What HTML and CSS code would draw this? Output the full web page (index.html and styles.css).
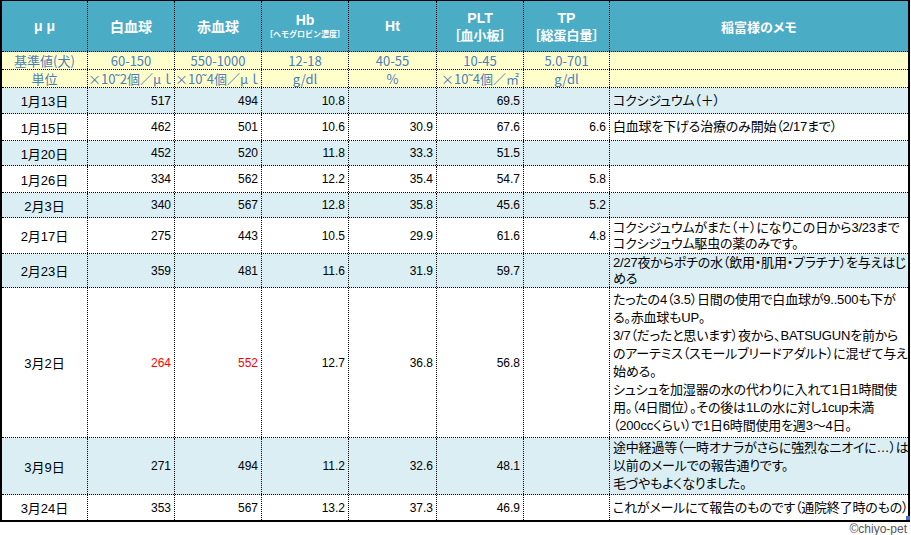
FILE: index.html
```html
<!DOCTYPE html>
<html lang="ja">
<head>
<meta charset="utf-8">
<title>血液検査結果</title>
<link rel="stylesheet" href="styles.css">
</head>
<body>
<div class="sheet">
  <div class="grid">
    <div class="row head">
      <div class="cell">μ μ</div>
      <div class="cell">白血球</div>
      <div class="cell">赤血球</div>
      <div class="cell stack"><span>Hb</span><span class="sub-tiny">［ヘモグロビン濃度］</span></div>
      <div class="cell">Ht</div>
      <div class="cell stack"><span>PLT</span><span class="sub">［血小板］</span></div>
      <div class="cell stack"><span>TP</span><span class="sub">［総蛋白量］</span></div>
      <div class="cell memo-head">稲富様のメモ</div>
    </div>
    <div class="row ref">
      <div class="cell">基準値(犬)</div><div class="cell">60-150</div><div class="cell">550-1000</div><div class="cell">12-18</div><div class="cell">40-55</div><div class="cell">10-45</div><div class="cell">5.0-701</div><div class="cell"></div>
    </div>
    <div class="row ref">
      <div class="cell">単位</div><div class="cell">×10˜2個／μｌ</div><div class="cell">×10˜4個／μｌ</div><div class="cell">g/dl</div><div class="cell">%</div><div class="cell">×10˜4個／㎡</div><div class="cell">g/dl</div><div class="cell"></div>
    </div>

    <div class="row data alt h26"><div class="cell date">1月13日</div><div class="cell n">517</div><div class="cell n">494</div><div class="cell n">10.8</div><div class="cell n"></div><div class="cell n">69.5</div><div class="cell n"></div><div class="cell memo">コクシジュウム（＋）</div></div>
    <div class="row data h27"><div class="cell date">1月15日</div><div class="cell n">462</div><div class="cell n">501</div><div class="cell n">10.6</div><div class="cell n">30.9</div><div class="cell n">67.6</div><div class="cell n">6.6</div><div class="cell memo">白血球を下げる治療のみ開始（2/17まで）</div></div>
    <div class="row data alt h25"><div class="cell date">1月20日</div><div class="cell n">452</div><div class="cell n">520</div><div class="cell n">11.8</div><div class="cell n">33.3</div><div class="cell n">51.5</div><div class="cell n"></div><div class="cell memo"></div></div>
    <div class="row data h27"><div class="cell date">1月26日</div><div class="cell n">334</div><div class="cell n">562</div><div class="cell n">12.2</div><div class="cell n">35.4</div><div class="cell n">54.7</div><div class="cell n">5.8</div><div class="cell memo"></div></div>
    <div class="row data alt h25"><div class="cell date">2月3日</div><div class="cell n">340</div><div class="cell n">567</div><div class="cell n">12.8</div><div class="cell n">35.8</div><div class="cell n">45.6</div><div class="cell n">5.2</div><div class="cell memo"></div></div>
    <div class="row data h36"><div class="cell date">2月17日</div><div class="cell n">275</div><div class="cell n">443</div><div class="cell n">10.5</div><div class="cell n">29.9</div><div class="cell n">61.6</div><div class="cell n">4.8</div><div class="cell memo"><p>コクシジュウムがまた（＋）になりこの日から3/23まで<br>コクシジュウム駆虫の薬のみです。</p></div></div>
    <div class="row data alt h34"><div class="cell date">2月23日</div><div class="cell n">359</div><div class="cell n">481</div><div class="cell n">11.6</div><div class="cell n">31.9</div><div class="cell n">59.7</div><div class="cell n"></div><div class="cell memo"><p>2/27夜からポチの水（飲用・肌用・プラチナ）を与えはじ<br>める</p></div></div>
    <div class="row data h150"><div class="cell date">3月2日</div><div class="cell n red">264</div><div class="cell n red">552</div><div class="cell n">12.7</div><div class="cell n">36.8</div><div class="cell n">56.8</div><div class="cell n"></div><div class="cell memo tall"><p>たったの4（3.5）日間の使用で白血球が9..500も下が<br>る。赤血球もUP。<br>3/7（だったと思います）夜から、BATSUGUNを前から<br>のアーテミス（スモールブリードアダルト）に混ぜて与え<br>始める。<br>シュシュを加湿器の水の代わりに入れて1日1時間使<br>用。（4日間位）。その後は1Lの水に対し1cup未満<br>（200ccくらい）で1日6時間使用を週3～4日。</p></div></div>
    <div class="row data alt h57"><div class="cell date">3月9日</div><div class="cell n">271</div><div class="cell n">494</div><div class="cell n">11.2</div><div class="cell n">32.6</div><div class="cell n">48.1</div><div class="cell n"></div><div class="cell memo tall"><p>途中経過等（一時オナラがさらに強烈なニオイに…）は<br>以前のメールでの報告通りです。<br>毛づやもよくなりました。</p></div></div>
    <div class="row data last h25"><div class="cell date">3月24日</div><div class="cell n">353</div><div class="cell n">567</div><div class="cell n">13.2</div><div class="cell n">37.3</div><div class="cell n">46.9</div><div class="cell n"></div><div class="cell memo">これがメールにて報告のものです（通院終了時のもの）</div></div>
  </div>
  <div class="credit">©chiyo-pet</div>
</div>
</body>
</html>
```

FILE: styles.css
```css
html, body {
  margin: 0;
  padding: 0;
  background: #ffffff;
}

body {
  font-family: "Liberation Sans", "Noto Sans CJK JP", sans-serif;
  font-size: 12px;
  color: #000;
}

.sheet {
  position: relative;
  width: 911px;
}

.grid {
  width: 910px;
  box-sizing: border-box;
  border-top: 1px solid #000;
  border-left: 2px solid #000;
  border-right: 2px solid #000;
  border-bottom: 2px solid #000;
}

.row {
  display: grid;
  grid-template-columns: 86px 87px 87px 87px 88px 87px 86px 1fr;
  box-sizing: border-box;
  border-bottom: 1px dotted #000;
}

.row.last { border-bottom: none; }

.cell {
  box-sizing: border-box;
  border-right: 1px dotted #000;
  display: flex;
  align-items: center;
  justify-content: center;
  padding: 0 3px;
  white-space: nowrap;
  overflow: hidden;
  min-width: 0;
}

.cell:last-child { border-right: none; }

/* header */
.head {
  height: 51px;
  background: #4bacc6;
  color: #ffffff;
  font-weight: bold;
  font-size: 14px;
  font-feature-settings: "palt";
}

.head .memo-head { font-size: 13px; }

.stack {
  flex-direction: column;
  line-height: 16px;
}

.sub {
  font-size: 13px;
  line-height: 17px;
  font-family: "Noto Sans CJK JP", sans-serif;
}

.sub-tiny {
  font-size: 8px;
  line-height: 12px;
  font-family: "Noto Sans CJK JP", sans-serif;
  font-feature-settings: normal;
}

/* reference rows */
.ref {
  height: 18px;
  background: #ffffcc;
  color: #4a7ebb;
  font-family: "Noto Sans CJK JP", sans-serif;
  font-size: 13px;
  line-height: 16px;
}

.ref .cell { padding: 0; }

/* data rows */
.data { background: #ffffff; }
.data.alt { background: #daeef3; }

.h25 { height: 25px; }
.h26 { height: 26px; }
.h27 { height: 27px; }
.h34 { height: 34px; }
.h36 { height: 36px; }
.h57 { height: 57px; }
.h150 { height: 150px; }

.date { font-size: 13px; }

.n {
  justify-content: flex-end;
  font-size: 12px;
}

.red { color: #ff0000; }

.memo {
  justify-content: flex-start;
  font-size: 13px;
  line-height: 16px;
  letter-spacing: -0.2px;
  font-feature-settings: "palt";
}

.memo p { margin: 0; }

.memo.tall { line-height: 18px; }

.credit {
  text-align: right;
  padding-right: 4px;
  font-size: 12px;
  line-height: 14px;
  color: #555;
}

.sheet::after {
  content: "";
  position: absolute;
  left: 906px;
  top: 516px;
  width: 4px;
  height: 4px;
  background: #3b6fc4;
}
```
